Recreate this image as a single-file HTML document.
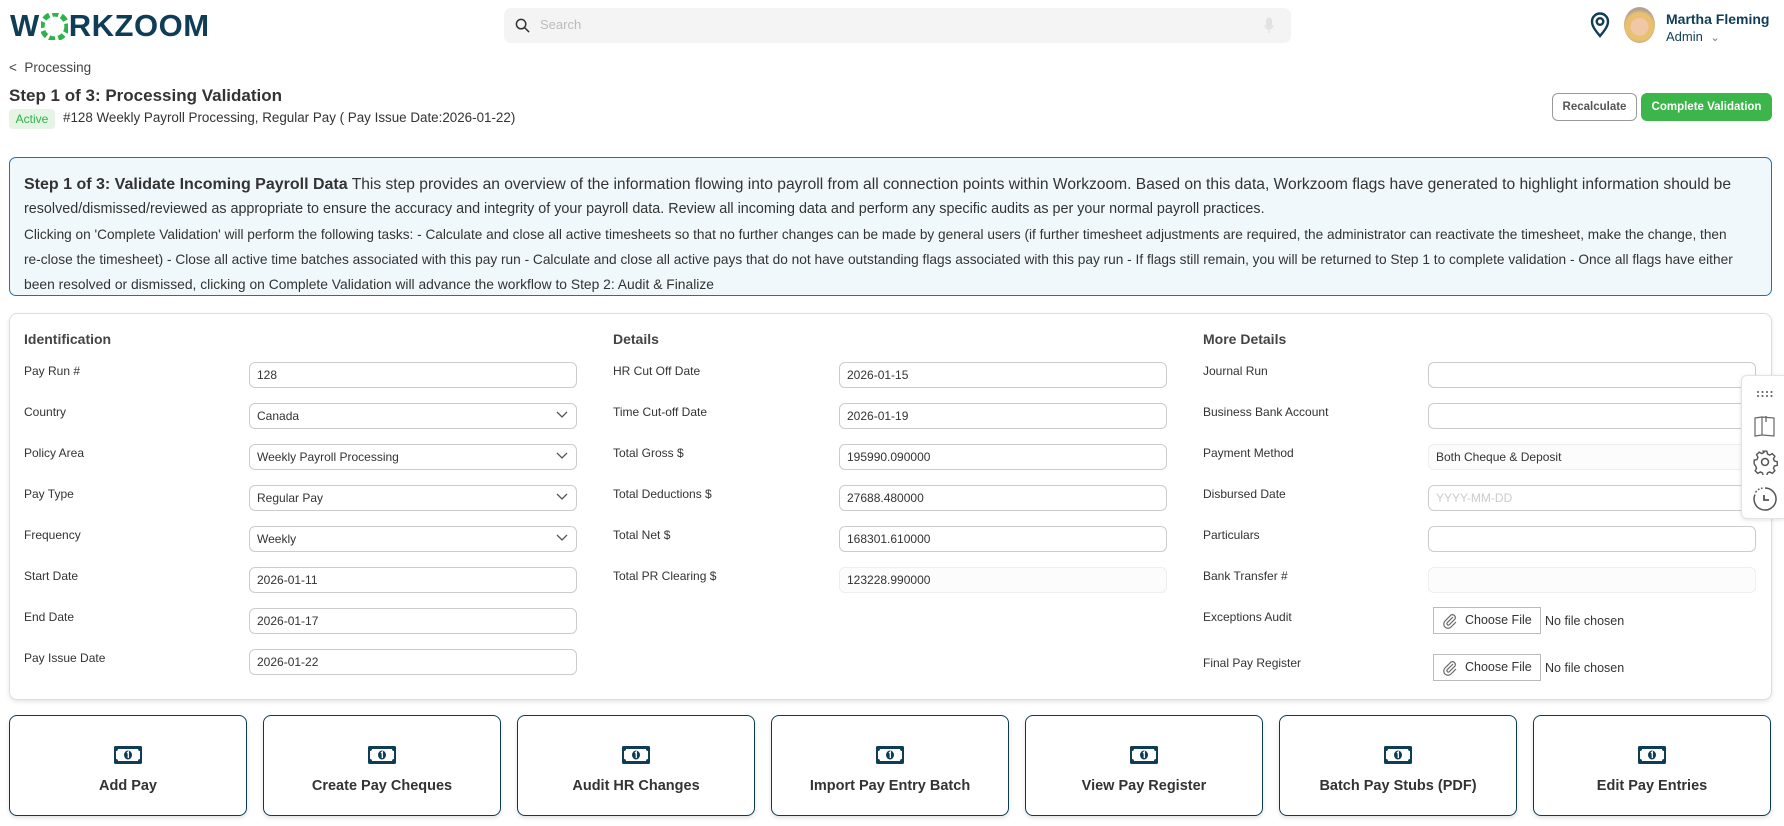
<!DOCTYPE html>
<html><head><meta charset="utf-8"><style>
*{box-sizing:border-box;margin:0;padding:0}
body{width:1784px;height:826px;overflow:hidden;background:#fff;font-family:"Liberation Sans",sans-serif;color:#333;position:relative}
.a{position:absolute}
.logo{left:10px;top:8px;font-size:31px;font-weight:bold;color:#0f3d56;letter-spacing:0.5px;display:flex;align-items:center}
.search{left:504px;top:8px;width:787px;height:35px;background:#f4f4f5;border-radius:7px}
.in{position:absolute;height:26px;border:1px solid #ccc;border-radius:6px;font-size:12px;padding:0 7px;line-height:24px;color:#333;background:#fff}
.in.dis{border-color:#eee;background:#fcfcfc}
.lbl{position:absolute;font-size:12px;color:#333}
.h{position:absolute;font-size:14px;font-weight:bold;color:#444;top:331px}
.chev{position:absolute;right:8px;top:7px}
.tile{position:absolute;top:715px;width:238px;height:101px;border:1px solid #0d3b4f;border-radius:8px;box-shadow:0 2px 4px rgba(0,0,0,.12);text-align:center}
.tile svg{position:absolute;left:104px;top:30px}
.tile span{position:absolute;left:0;right:0;top:62px;font-size:14.5px;font-weight:bold;color:#333}
.info{left:9px;top:157px;width:1763px;height:139px;background:#f1f8fc;border:1px solid #2d6e99;border-radius:7px;padding:14px 14px;line-height:25px;color:#333;white-space:nowrap;overflow:hidden}
.info div{height:25px}
.fb{position:absolute;height:27px;width:108px;border:1px solid #bbb;background:#fff;font-size:12.5px;line-height:25px;padding-left:31px}
</style></head><body>
<div class="a logo">W<svg width="27" height="27" viewBox="0 0 26 26" style="margin:0 1px"><g fill="#2db34a"><circle cx="13" cy="13" r="12" fill="none" stroke="#2db34a" stroke-width="5" stroke-dasharray="6 3"/></g></svg>RKZOOM</div>
<div class="a search"><svg class="a" style="left:11px;top:10px" width="15" height="15" viewBox="0 0 16 16"><circle cx="6.5" cy="6.5" r="5" fill="none" stroke="#333" stroke-width="1.6"/><path d="M10.5 10.5L15 15" stroke="#333" stroke-width="1.6"/></svg><span class="a" style="left:36px;top:9px;font-size:13px;color:#bbb">Search</span><svg class="a" style="left:760px;top:9px" width="10" height="17" viewBox="0 0 10 17"><rect x="2" y="0.5" width="6" height="11" rx="3" fill="#e2e2e2"/><path d="M1 8a4 4 0 0 0 8 0M5 12v4" stroke="#e2e2e2" fill="none" stroke-width="1.3"/></svg></div>
<svg class="a" style="left:1590px;top:12px" width="20" height="26" viewBox="0 0 20 26"><path d="M10 24C5 18 2 14 2 9.5a8 8 0 0 1 16 0C18 14 15 18 10 24z" fill="none" stroke="#0f3d56" stroke-width="2.4"/><circle cx="10" cy="9.5" r="3.3" fill="none" stroke="#0f3d56" stroke-width="2.4"/></svg>
<div class="a" style="left:1624px;top:7px;width:31px;height:36px;border-radius:50%;background:radial-gradient(circle at 50% 55%,#f0c8a8 0 35%,#e8c070 36% 55%,#b0a090 70%);"></div>
<div class="a" style="left:1666px;top:11px;font-size:14px;font-weight:bold;color:#0f3d56">Martha Fleming</div>
<div class="a" style="left:1666px;top:29px;font-size:13px;color:#0f3d56">Admin <span style="color:#777;font-size:11px;margin-left:4px">&#8964;</span></div>
<div class="a" style="left:9px;top:60px;font-size:13.5px;color:#444">&lt;&nbsp; Processing</div>
<div class="a" style="left:9px;top:86px;font-size:17px;font-weight:bold;color:#333">Step 1 of 3: Processing Validation</div>
<div class="a" style="left:9px;top:109px;width:46px;height:20px;background:#e6f4e6;border-radius:4px;color:#2db34a;font-size:12px;line-height:20px;text-align:center">Active</div>
<div class="a" style="left:63px;top:110px;font-size:13.4px;color:#333">#128 Weekly Payroll Processing, Regular Pay ( Pay Issue Date:2026-01-22)</div>
<div class="a" style="left:1552px;top:93px;width:85px;height:28px;border:1px solid #999;border-radius:6px;font-size:11.5px;font-weight:bold;color:#555;text-align:center;line-height:26px">Recalculate</div>
<div class="a" style="left:1641px;top:93px;width:131px;height:28px;background:#3cb54a;border-radius:6px;font-size:11.5px;font-weight:bold;color:#fff;text-align:center;line-height:28px">Complete Validation</div>
<div class="a info">
<div style="font-size:15.6px"><b style="font-size:16px">Step 1 of 3: Validate Incoming Payroll Data</b> This step provides an overview of the information flowing into payroll from all connection points within Workzoom. Based on this data, Workzoom flags have generated to highlight information should be</div>
<div style="font-size:14.35px">resolved/dismissed/reviewed as appropriate to ensure the accuracy and integrity of your payroll data. Review all incoming data and perform any specific audits as per your normal payroll practices.</div>
<div style="font-size:13.65px">Clicking on 'Complete Validation' will perform the following tasks: - Calculate and close all active timesheets so that no further changes can be made by general users (if further timesheet adjustments are required, the administrator can reactivate the timesheet, make the change, then</div>
<div style="font-size:13.7px">re-close the timesheet) - Close all active time batches associated with this pay run - Calculate and close all active pays that do not have outstanding flags associated with this pay run - If flags still remain, you will be returned to Step 1 to complete validation - Once all flags have either</div>
<div style="font-size:13.85px">been resolved or dismissed, clicking on Complete Validation will advance the workflow to Step 2: Audit &amp; Finalize</div>
</div>
<div class="a" style="left:9px;top:313px;width:1763px;height:387px;border:1px solid #ddd;border-radius:8px;box-shadow:0 2px 4px rgba(0,0,0,.1)"></div>
<div class="h" style="left:24px">Identification</div>
<div class="h" style="left:613px">Details</div>
<div class="h" style="left:1203px">More Details</div>
<div class="lbl" style="left:24px;top:364px">Pay Run #</div><div class="in" style="left:249px;top:362px;width:328px">128</div>
<div class="lbl" style="left:24px;top:405px">Country</div><div class="in" style="left:249px;top:403px;width:328px">Canada<svg class="chev" width="12" height="8" viewBox="0 0 12 8"><path d="M1 1l5 5 5-5" fill="none" stroke="#555" stroke-width="1.3"/></svg></div>
<div class="lbl" style="left:24px;top:446px">Policy Area</div><div class="in" style="left:249px;top:444px;width:328px">Weekly Payroll Processing<svg class="chev" width="12" height="8" viewBox="0 0 12 8"><path d="M1 1l5 5 5-5" fill="none" stroke="#555" stroke-width="1.3"/></svg></div>
<div class="lbl" style="left:24px;top:487px">Pay Type</div><div class="in" style="left:249px;top:485px;width:328px">Regular Pay<svg class="chev" width="12" height="8" viewBox="0 0 12 8"><path d="M1 1l5 5 5-5" fill="none" stroke="#555" stroke-width="1.3"/></svg></div>
<div class="lbl" style="left:24px;top:528px">Frequency</div><div class="in" style="left:249px;top:526px;width:328px">Weekly<svg class="chev" width="12" height="8" viewBox="0 0 12 8"><path d="M1 1l5 5 5-5" fill="none" stroke="#555" stroke-width="1.3"/></svg></div>
<div class="lbl" style="left:24px;top:569px">Start Date</div><div class="in" style="left:249px;top:567px;width:328px">2026-01-11</div>
<div class="lbl" style="left:24px;top:610px">End Date</div><div class="in" style="left:249px;top:608px;width:328px">2026-01-17</div>
<div class="lbl" style="left:24px;top:651px">Pay Issue Date</div><div class="in" style="left:249px;top:649px;width:328px">2026-01-22</div>
<div class="lbl" style="left:613px;top:364px">HR Cut Off Date</div><div class="in" style="left:839px;top:362px;width:328px">2026-01-15</div>
<div class="lbl" style="left:613px;top:405px">Time Cut-off Date</div><div class="in" style="left:839px;top:403px;width:328px">2026-01-19</div>
<div class="lbl" style="left:613px;top:446px">Total Gross $</div><div class="in" style="left:839px;top:444px;width:328px">195990.090000</div>
<div class="lbl" style="left:613px;top:487px">Total Deductions $</div><div class="in" style="left:839px;top:485px;width:328px">27688.480000</div>
<div class="lbl" style="left:613px;top:528px">Total Net $</div><div class="in" style="left:839px;top:526px;width:328px">168301.610000</div>
<div class="lbl" style="left:613px;top:569px">Total PR Clearing $</div><div class="in dis" style="left:839px;top:567px;width:328px">123228.990000</div>
<div class="lbl" style="left:1203px;top:364px">Journal Run</div><div class="in" style="left:1428px;top:362px;width:328px"></div>
<div class="lbl" style="left:1203px;top:405px">Business Bank Account</div><div class="in" style="left:1428px;top:403px;width:328px"></div>
<div class="lbl" style="left:1203px;top:446px">Payment Method</div><div class="in dis" style="left:1428px;top:444px;width:328px">Both Cheque &amp; Deposit</div>
<div class="lbl" style="left:1203px;top:487px">Disbursed Date</div><div class="in" style="left:1428px;top:485px;width:328px;color:#ccc">YYYY-MM-DD</div>
<div class="lbl" style="left:1203px;top:528px">Particulars</div><div class="in" style="left:1428px;top:526px;width:328px"></div>
<div class="lbl" style="left:1203px;top:569px">Bank Transfer #</div><div class="in dis" style="left:1428px;top:567px;width:328px"></div>
<div class="lbl" style="left:1203px;top:610px">Exceptions Audit</div>
<div class="fb" style="left:1433px;top:607px"><svg class="a" style="left:8px;top:5px" width="16" height="16" viewBox="0 0 16 16"><path d="M11 4L5 10a1.5 1.5 0 0 0 2 2l6-6a3 3 0 0 0-4-4L3 8a4.2 4.2 0 0 0 6 6l5-5" fill="none" stroke="#666" stroke-width="1.2"/></svg>Choose File</div><div class="lbl" style="left:1545px;top:614px;font-size:12.5px">No file chosen</div>
<div class="lbl" style="left:1203px;top:656px">Final Pay Register</div>
<div class="fb" style="left:1433px;top:654px"><svg class="a" style="left:8px;top:5px" width="16" height="16" viewBox="0 0 16 16"><path d="M11 4L5 10a1.5 1.5 0 0 0 2 2l6-6a3 3 0 0 0-4-4L3 8a4.2 4.2 0 0 0 6 6l5-5" fill="none" stroke="#666" stroke-width="1.2"/></svg>Choose File</div><div class="lbl" style="left:1545px;top:661px;font-size:12.5px">No file chosen</div>
<div class="a" style="left:1741px;top:375px;width:43px;height:144px;background:#fff;border:1px solid #e3e3e3;border-right:none;border-radius:6px 0 0 6px;box-shadow:0 1px 4px rgba(0,0,0,.12)">
<svg class="a" style="left:14px;top:14px" width="18" height="8" viewBox="0 0 18 8"><g fill="#555"><circle cx="2" cy="2" r="1"/><circle cx="6.5" cy="2" r="1"/><circle cx="11" cy="2" r="1"/><circle cx="15.5" cy="2" r="1"/><circle cx="2" cy="6" r="1"/><circle cx="6.5" cy="6" r="1"/><circle cx="11" cy="6" r="1"/><circle cx="15.5" cy="6" r="1"/></g></svg>
<svg class="a" style="left:10px;top:37px" width="26" height="26" viewBox="0 0 26 26"><path d="M3 5l7-1v18l-7 1zM10 4l12 1v18l-12-1" fill="none" stroke="#666" stroke-width="1.2"/><path d="M14 3v6" stroke="#666" stroke-width="1.3"/></svg>
<svg class="a" style="left:10px;top:73px" width="26" height="26" viewBox="0 0 24 24"><circle cx="12" cy="12" r="3.2" fill="none" stroke="#555" stroke-width="1.4"/><path d="M10.3 2h3.4l.6 2.6 2 1 2.4-1.3 2.4 2.4-1.3 2.4.9 2 2.6.6v3.4l-2.6.6-.9 2 1.3 2.4-2.4 2.4-2.4-1.3-2 .9-.6 2.6h-3.4l-.6-2.6-2-.9-2.4 1.3-2.4-2.4 1.3-2.4-.9-2L2 13.7v-3.4l2.6-.6.9-2-1.3-2.4 2.4-2.4 2.4 1.3 2-1z" fill="none" stroke="#555" stroke-width="1.3"/></svg>
<svg class="a" style="left:10px;top:110px" width="26" height="26" viewBox="0 0 26 26"><path d="M13 2a11 11 0 1 1-10 6.5" fill="none" stroke="#555" stroke-width="1.5"/><path d="M3.5 6.5l1-1.5M6 3.8l1.4-.9M9 2.4l1.5-.3" stroke="#555" stroke-width="1.5"/><path d="M12 9v5h5" fill="none" stroke="#555" stroke-width="1.8"/></svg>
</div>
<div class="tile" style="left:9px"><svg width="28" height="18" viewBox="0 0 28 18"><rect width="28" height="18" rx="1.5" fill="#0f3d56"/><path d="M4 3h20a2 2 0 0 0 2 2v8a2 2 0 0 0-2 2H4a2 2 0 0 0-2-2V5a2 2 0 0 0 2-2z" fill="#fff"/><ellipse cx="14" cy="9" rx="4" ry="4.5" fill="#0f3d56"/><path d="M13 7l1.3-1v6" stroke="#fff" stroke-width="1.3" fill="none"/></svg><span>Add Pay</span></div>
<div class="tile" style="left:263px"><svg width="28" height="18" viewBox="0 0 28 18"><rect width="28" height="18" rx="1.5" fill="#0f3d56"/><path d="M4 3h20a2 2 0 0 0 2 2v8a2 2 0 0 0-2 2H4a2 2 0 0 0-2-2V5a2 2 0 0 0 2-2z" fill="#fff"/><ellipse cx="14" cy="9" rx="4" ry="4.5" fill="#0f3d56"/><path d="M13 7l1.3-1v6" stroke="#fff" stroke-width="1.3" fill="none"/></svg><span>Create Pay Cheques</span></div>
<div class="tile" style="left:517px"><svg width="28" height="18" viewBox="0 0 28 18"><rect width="28" height="18" rx="1.5" fill="#0f3d56"/><path d="M4 3h20a2 2 0 0 0 2 2v8a2 2 0 0 0-2 2H4a2 2 0 0 0-2-2V5a2 2 0 0 0 2-2z" fill="#fff"/><ellipse cx="14" cy="9" rx="4" ry="4.5" fill="#0f3d56"/><path d="M13 7l1.3-1v6" stroke="#fff" stroke-width="1.3" fill="none"/></svg><span>Audit HR Changes</span></div>
<div class="tile" style="left:771px"><svg width="28" height="18" viewBox="0 0 28 18"><rect width="28" height="18" rx="1.5" fill="#0f3d56"/><path d="M4 3h20a2 2 0 0 0 2 2v8a2 2 0 0 0-2 2H4a2 2 0 0 0-2-2V5a2 2 0 0 0 2-2z" fill="#fff"/><ellipse cx="14" cy="9" rx="4" ry="4.5" fill="#0f3d56"/><path d="M13 7l1.3-1v6" stroke="#fff" stroke-width="1.3" fill="none"/></svg><span>Import Pay Entry Batch</span></div>
<div class="tile" style="left:1025px"><svg width="28" height="18" viewBox="0 0 28 18"><rect width="28" height="18" rx="1.5" fill="#0f3d56"/><path d="M4 3h20a2 2 0 0 0 2 2v8a2 2 0 0 0-2 2H4a2 2 0 0 0-2-2V5a2 2 0 0 0 2-2z" fill="#fff"/><ellipse cx="14" cy="9" rx="4" ry="4.5" fill="#0f3d56"/><path d="M13 7l1.3-1v6" stroke="#fff" stroke-width="1.3" fill="none"/></svg><span>View Pay Register</span></div>
<div class="tile" style="left:1279px"><svg width="28" height="18" viewBox="0 0 28 18"><rect width="28" height="18" rx="1.5" fill="#0f3d56"/><path d="M4 3h20a2 2 0 0 0 2 2v8a2 2 0 0 0-2 2H4a2 2 0 0 0-2-2V5a2 2 0 0 0 2-2z" fill="#fff"/><ellipse cx="14" cy="9" rx="4" ry="4.5" fill="#0f3d56"/><path d="M13 7l1.3-1v6" stroke="#fff" stroke-width="1.3" fill="none"/></svg><span>Batch Pay Stubs (PDF)</span></div>
<div class="tile" style="left:1533px"><svg width="28" height="18" viewBox="0 0 28 18"><rect width="28" height="18" rx="1.5" fill="#0f3d56"/><path d="M4 3h20a2 2 0 0 0 2 2v8a2 2 0 0 0-2 2H4a2 2 0 0 0-2-2V5a2 2 0 0 0 2-2z" fill="#fff"/><ellipse cx="14" cy="9" rx="4" ry="4.5" fill="#0f3d56"/><path d="M13 7l1.3-1v6" stroke="#fff" stroke-width="1.3" fill="none"/></svg><span>Edit Pay Entries</span></div>
</body></html>
